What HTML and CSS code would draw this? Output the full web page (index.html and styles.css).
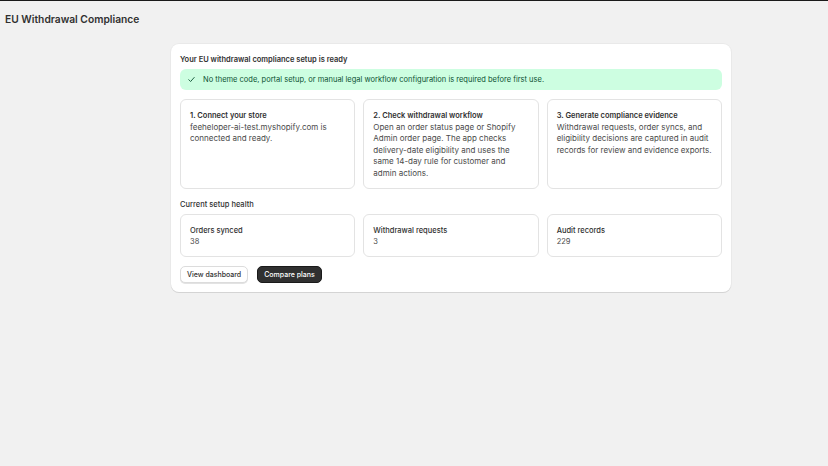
FILE: index.html
```html
<!DOCTYPE html>
<html lang="en">
<head>
    <meta charset="UTF-8">
    <meta name="viewport" content="width=device-width, initial-scale=1.0">
    <title>EU Withdrawal Compliance</title>
    <link rel="stylesheet" href="styles.css">
</head>
<body>
    <h1 class="page-title">EU Withdrawal Compliance</h1>

    <div class="layout">
        <div class="card">
            <h2 class="card-heading">Your EU withdrawal compliance setup is ready</h2>

            <div class="banner">
                <svg class="banner-icon" viewBox="0 0 20 20" width="9" height="9">
                    <path d="M4 10.5l4 4 8-9" fill="none" stroke="#0c5132" stroke-width="2" stroke-linecap="round" stroke-linejoin="round"/>
                </svg>
                <span>No theme code, portal setup, or manual legal workflow configuration is required before first use.</span>
            </div>

            <div class="steps">
                <div class="box step">
                    <p class="box-title">1. Connect your store</p>
                    <p class="box-text">feeheloper-ai-test.myshopify.com is connected and ready.</p>
                </div>
                <div class="box step">
                    <p class="box-title">2. Check withdrawal workflow</p>
                    <p class="box-text">Open an order status page or Shopify Admin order page. The app checks delivery-date eligibility and uses the same 14-day rule for customer and admin actions.</p>
                </div>
                <div class="box step">
                    <p class="box-title">3. Generate compliance evidence</p>
                    <p class="box-text">Withdrawal requests, order syncs, and eligibility decisions are captured in audit records for review and evidence exports.</p>
                </div>
            </div>

            <h3 class="section-title">Current setup health</h3>

            <div class="metrics">
                <div class="box metric">
                    <p class="metric-label">Orders synced</p>
                    <p class="metric-value">38</p>
                </div>
                <div class="box metric">
                    <p class="metric-label">Withdrawal requests</p>
                    <p class="metric-value">3</p>
                </div>
                <div class="box metric">
                    <p class="metric-label">Audit records</p>
                    <p class="metric-value">229</p>
                </div>
            </div>

            <div class="actions">
                <button class="btn btn-secondary">View dashboard</button>
                <button class="btn btn-primary">Compare plans</button>
            </div>
        </div>
    </div>
</body>
</html>
```

FILE: styles.css
```css
body {
    margin: 0;
    font-family: Inter, "Noto Sans", sans-serif;
    background-color: #f1f1f1;
    color: #303030;
    border-top: 1px solid #1a1a1a;
    min-height: 465px;
}
p, h1, h2, h3 {
    margin: 0;
}
.page-title {
    font-size: 10.25px;
    font-weight: 600;
    line-height: 14px;
    padding: 11px 5px 0;
}
.layout {
    padding: 18px 97px 0 171px;
}
.card {
    background: #fff;
    border-radius: 8px;
    box-shadow: 0 1px 0 #d4d4d4, 0 0 0 1px rgba(0, 0, 0, 0.03);
    padding: 11px 9px 9px 9px;
}
.card-heading {
    font-size: 7.5px;
    font-weight: 600;
    line-height: 10px;
    margin-bottom: 4px;
}
.banner {
    display: flex;
    align-items: center;
    gap: 7px;
    background: #cdfee1;
    color: #0c5132;
    border-radius: 6px;
    height: 21px;
    padding: 0 7px;
    font-size: 7.5px;
}
.banner-icon {
    flex: none;
}
.steps, .metrics {
    display: grid;
    grid-template-columns: repeat(3, 1fr);
    gap: 8px;
}
.steps {
    margin-top: 9px;
}
.box {
    border: 1px solid #e3e3e3;
    border-radius: 6px;
    padding: 10px 9px;
}
.step {
    height: 90px;
    box-sizing: border-box;
}
.box-title {
    font-size: 7.5px;
    font-weight: 600;
    line-height: 11.5px;
}
.box-text {
    font-size: 8px;
    line-height: 11.6px;
    color: #4a4a4a;
}
.section-title {
    font-size: 7.5px;
    font-weight: 500;
    line-height: 10px;
    margin: 11px 0 4px;
}
.metric {
    height: 43px;
    box-sizing: border-box;
    padding: 10px 9px;
}
.metric-label {
    font-size: 7.5px;
    font-weight: 500;
    line-height: 11px;
}
.metric-value {
    font-size: 7.5px;
    line-height: 11px;
    color: #4a4a4a;
}
.actions {
    display: flex;
    gap: 9px;
    margin-top: 9px;
}
.btn {
    font-family: inherit;
    font-size: 7px;
    font-weight: 500;
    height: 17px;
    border-radius: 5px;
    padding: 0 6px;
    cursor: pointer;
}
.btn-secondary {
    background: #fff;
    color: #303030;
    border: 1px solid #dcdcdc;
    box-shadow: 0 1px 0 #e3e3e3;
}
.btn-primary {
    background: #303030;
    color: #fff;
    border: 1px solid #1a1a1a;
}
```
